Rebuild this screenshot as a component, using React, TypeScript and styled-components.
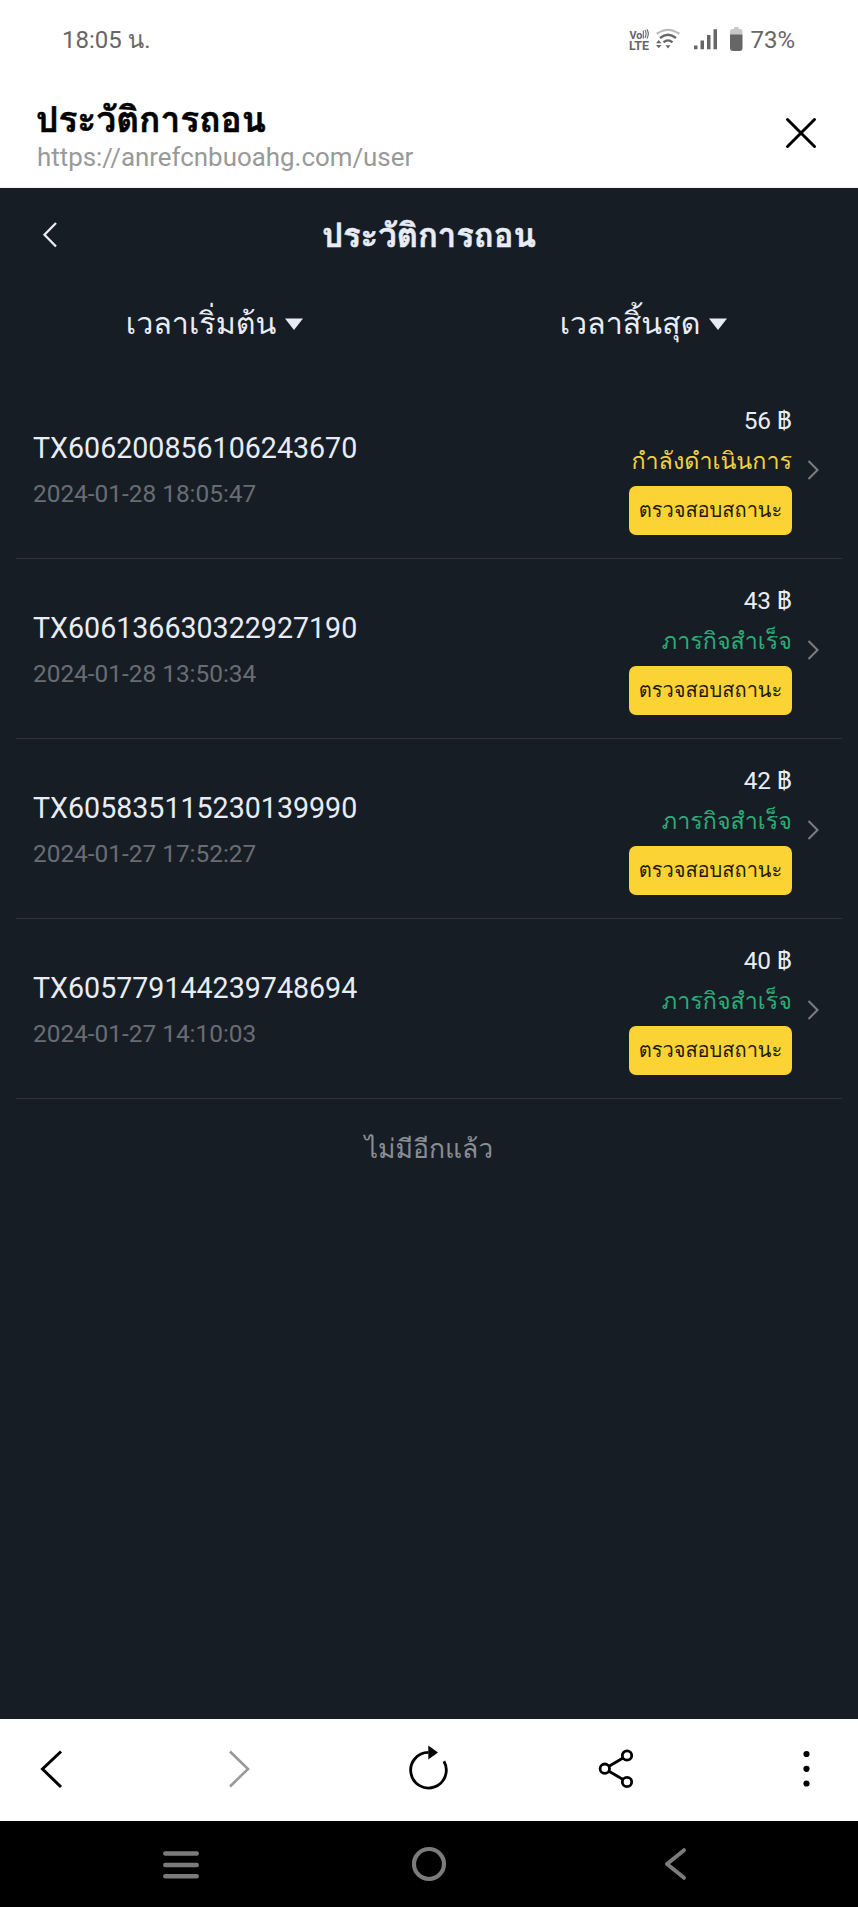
import React from "react";
import styled, { createGlobalStyle } from "styled-components";

const GlobalStyle = createGlobalStyle`
  * { box-sizing: border-box; }
  body { margin: 0; background: #fff; }
`;

const Screen = styled.div`
  display: flex;
  flex-direction: column;
  width: 858px;
  height: 1907px;
  background: #fff;
  font-family: Roboto, Loma, sans-serif;
`;

const StatusBar = styled.div`
  display: flex;
  align-items: center;
  justify-content: space-between;
  height: 80px;
  padding: 0 63px 0 62px;
  color: #666;
  font-size: 24px;
  line-height: 30px;
`;

const StatusIcons = styled.div`
  display: flex;
  align-items: center;
  gap: 7px;
`;

const Glyph = styled.svg`
  display: block;
  flex: none;
  overflow: visible;
`;

const SignalGlyph = styled(Glyph)`
  margin-left: 7px;
`;

const BatteryGlyph = styled(Glyph)`
  margin-left: 5px;
`;

const BrowserHeader = styled.header`
  display: flex;
  align-items: flex-start;
  justify-content: space-between;
  height: 108px;
  padding: 20px 42px 0 36px;
  border-bottom: 1px solid #eee;
`;

const PageTitle = styled.div<{ $size: number }>`
  font-size: ${(p) => p.$size}px;
  font-weight: 700;
  line-height: 40px;
  -webkit-text-stroke: 0.5px currentColor;
  white-space: nowrap;
`;

const PageUrl = styled.div`
  padding-left: 1px;
  color: #999;
  font-size: 25.9px;
  line-height: 34px;
`;

const CloseButton = styled.div`
  padding-top: 18px;
`;

const Content = styled.main`
  flex: 1;
  background: #171d25;
  color: #e8ecf4;
`;

const TitleBar = styled.div`
  display: grid;
  grid-template-columns: 60px 1fr 60px;
  align-items: center;
  justify-items: center;
  height: 95px;
  padding: 0 20px;
`;

const Filters = styled.div`
  display: grid;
  grid-template-columns: 1fr 1fr;
  height: 82px;
  margin-bottom: 14px;
`;

const Filter = styled.div`
  display: flex;
  align-items: center;
  justify-content: center;
  gap: 9px;
  font-size: 30.4px;
  line-height: 40px;
`;

const List = styled.div`
  padding: 0 16px;
`;

const Row = styled.div`
  display: flex;
  align-items: flex-start;
  height: 180px;
  padding: 27px 23px 0 17px;
  border-bottom: 1px solid #2f343b;
`;

const RowInfo = styled.div`
  flex: 1;
  padding-top: 22px;
`;

const TxId = styled.div`
  font-size: 28.6px;
  line-height: 40px;
`;

const TxDate = styled.div`
  margin-top: 10px;
  color: #696d73;
  font-size: 24.4px;
  line-height: 32px;
`;

const RowState = styled.div`
  display: flex;
  flex-direction: column;
  align-items: flex-end;
  width: 163px;
`;

const Amount = styled.div`
  font-size: 24.4px;
  line-height: 30px;
`;

const State = styled.div<{ $done: boolean }>`
  margin: 10px 0;
  color: ${(p) => (p.$done ? "#2bab78" : "#f2d13d")};
  font-size: 23.3px;
  line-height: 30px;
  white-space: nowrap;
`;

const CheckButton = styled.div`
  width: 163px;
  height: 49px;
  border-radius: 7px;
  background: #fcd334;
  color: #221a08;
  font-size: 20px;
  line-height: 48px;
  text-align: center;
  white-space: nowrap;
`;

const RowArrow = styled.div`
  padding: 54px 0 0 15px;
`;

const EndNote = styled.div`
  padding-top: 30px;
  color: #898d92;
  font-size: 26.5px;
  line-height: 40px;
  text-align: center;
`;

const Toolbar = styled.div`
  display: flex;
  align-items: center;
  justify-content: space-between;
  height: 102px;
  padding: 0 31px;
  background: #fff;
`;

const SystemNav = styled.div`
  display: flex;
  align-items: center;
  justify-content: space-between;
  height: 86px;
  padding: 0 161px;
  background: #000;
`;

const rows = [
  { id: "TX606200856106243670", date: "2024-01-28 18:05:47", amount: "56 ฿", done: false },
  { id: "TX606136630322927190", date: "2024-01-28 13:50:34", amount: "43 ฿", done: true },
  { id: "TX605835115230139990", date: "2024-01-27 17:52:27", amount: "42 ฿", done: true },
  { id: "TX605779144239748694", date: "2024-01-27 14:10:03", amount: "40 ฿", done: true },
];

const Caret = () => (
  <Glyph width="18" height="12" viewBox="0 0 18 12">
    <path d="M0 .5h18L9 12z" fill="#e8ecf4" />
  </Glyph>
);

export default function App() {
  return (
    <Screen>
      <GlobalStyle />
      <StatusBar>
        <span>18:05 น.</span>
        <StatusIcons>
          <Glyph width="20" height="24" viewBox="0 0 20 24" fill="#666">
            <text x="0.5" y="10.5" fontSize="11" fontWeight="700" textLength="13" lengthAdjust="spacingAndGlyphs">Vo</text>
            <path d="M14.3 2.5v8M16 2q2.200 4 0 8M18 1.300q2.600 5 0 9.200" fill="none" stroke="#666" strokeWidth="1.100" />
            <text x="0" y="22" fontSize="12" fontWeight="700" textLength="20" lengthAdjust="spacingAndGlyphs">LTE</text>
          </Glyph>
          <Glyph width="24" height="24" viewBox="0 0 24 24" fill="none" strokeWidth="2.300">
            <path d="M.8 5.800Q12-2.200 23.300 5.800" stroke="#bdbdbd" />
            <path d="M4 10Q12 3.500 20 10M7.500 14.300Q12 10.500 16.500 14.300" stroke="#666" />
            <path d="M9.500 17.300h5L12 20.500zM0 15.200h5.500L2.700 12zM0 17h5.500l-2.800 3.300z" fill="#666" />
          </Glyph>
          <SignalGlyph width="24" height="24" viewBox="0 0 24 24" fill="#666">
            <path d="M0 17.500h3.500v3.800H0zM6.500 12.500H10v8.800H6.500zM13 7h3.500v14.300H13zM19.500 1.200H23v20.100h-3.500z" />
          </SignalGlyph>
          <BatteryGlyph width="13" height="26" viewBox="0 0 13 26">
            <path d="M0 8V4.500Q0 2 2.500 2H4V0h4.500v2H10q2.500 0 2.500 2.500V8z" fill="#c8c8c8" />
            <path d="M0 7.500h12.500V21q0 3-3 3H3q-3 0-3-3z" fill="#666" />
          </BatteryGlyph>
          <span>73%</span>
        </StatusIcons>
      </StatusBar>

      <BrowserHeader>
        <div>
          <PageTitle $size={35.3}>ประวัติการถอน</PageTitle>
          <PageUrl>https://anrefcnbuoahg.com/user</PageUrl>
        </div>
        <CloseButton>
          <Glyph width="30" height="30" viewBox="0 0 30 30">
            <path d="M1.500 1.500l27 27M28.500 1.500l-27 27" stroke="#000" strokeWidth="3" strokeLinecap="round" />
          </Glyph>
        </CloseButton>
      </BrowserHeader>

      <Content>
        <TitleBar>
          <Glyph width="16" height="28" viewBox="0 0 16 28">
            <path d="M14 1L2.500 12.700 14 24.500" fill="none" stroke="#e8ecf4" strokeWidth="2.300" />
          </Glyph>
          <PageTitle $size={32.8}>ประวัติการถอน</PageTitle>
        </TitleBar>
        <Filters>
          <Filter>เวลาเริ่มต้น<Caret /></Filter>
          <Filter>เวลาสิ้นสุด<Caret /></Filter>
        </Filters>
        <List>
          {rows.map((r) => (
            <Row key={r.id}>
              <RowInfo>
                <TxId>{r.id}</TxId>
                <TxDate>{r.date}</TxDate>
              </RowInfo>
              <RowState>
                <Amount>{r.amount}</Amount>
                <State $done={r.done}>{r.done ? "ภารกิจสำเร็จ" : "กำลังดำเนินการ"}</State>
                <CheckButton>ตรวจสอบสถานะ</CheckButton>
              </RowState>
              <RowArrow>
                <Glyph width="12" height="20" viewBox="0 0 12 20">
                  <path d="M1.500 1L10.500 10 1.500 19" fill="none" stroke="#7b7f85" strokeWidth="2" />
                </Glyph>
              </RowArrow>
            </Row>
          ))}
        </List>
        <EndNote>ไม่มีอีกแล้ว</EndNote>
      </Content>

      <Toolbar>
        <Glyph width="40" height="40" viewBox="0 0 40 40">
          <path d="M30 1.500L11.500 19 30 37" fill="none" stroke="#000" strokeWidth="3" />
        </Glyph>
        <Glyph width="40" height="40" viewBox="0 0 40 40">
          <path d="M10 1.500L28 19 10 36.500" fill="none" stroke="#999" strokeWidth="2.600" />
        </Glyph>
        <Glyph width="40" height="40" viewBox="0 0 40 40">
          <path d="M19.500 2.400A17.800 17.800 0 1 0 34.900 11.300" fill="none" stroke="#000" strokeWidth="2.800" />
          <path d="M19.300-4.500L29 2.500 19.300 9.500z" />
        </Glyph>
        <Glyph width="40" height="40" viewBox="0 0 40 40" fill="none" stroke="#000" strokeWidth="2.800">
          <path d="M11 16.300L25 8M11 21.200L25 29.500" />
          <circle cx="6.800" cy="18.700" r="4.700" />
          <circle cx="29" cy="5.500" r="4.700" />
          <circle cx="29" cy="32" r="4.700" />
        </Glyph>
        <Glyph width="40" height="40" viewBox="0 0 40 40">
          <circle cx="19.500" cy="4" r="3.100" />
          <circle cx="19.500" cy="18.800" r="3.100" />
          <circle cx="19.500" cy="33.500" r="3.100" />
        </Glyph>
      </Toolbar>

      <SystemNav>
        <Glyph width="40" height="40" viewBox="0 0 40 40" stroke="#7b7b7b" strokeWidth="4.500" strokeLinecap="round">
          <path d="M4.300 9.500h31.400M4.300 20.900h31.400M4.300 32.200h31.400" />
        </Glyph>
        <Glyph width="40" height="40" viewBox="0 0 40 40">
          <circle cx="20" cy="20" r="15" fill="none" stroke="#7b7b7b" strokeWidth="4.200" />
        </Glyph>
        <Glyph width="40" height="40" viewBox="0 0 40 40">
          <path d="M27 6.200L10 20 27 33.800" fill="none" stroke="#7b7b7b" strokeWidth="4" strokeLinecap="round" strokeLinejoin="round" />
        </Glyph>
      </SystemNav>
    </Screen>
  );
}
